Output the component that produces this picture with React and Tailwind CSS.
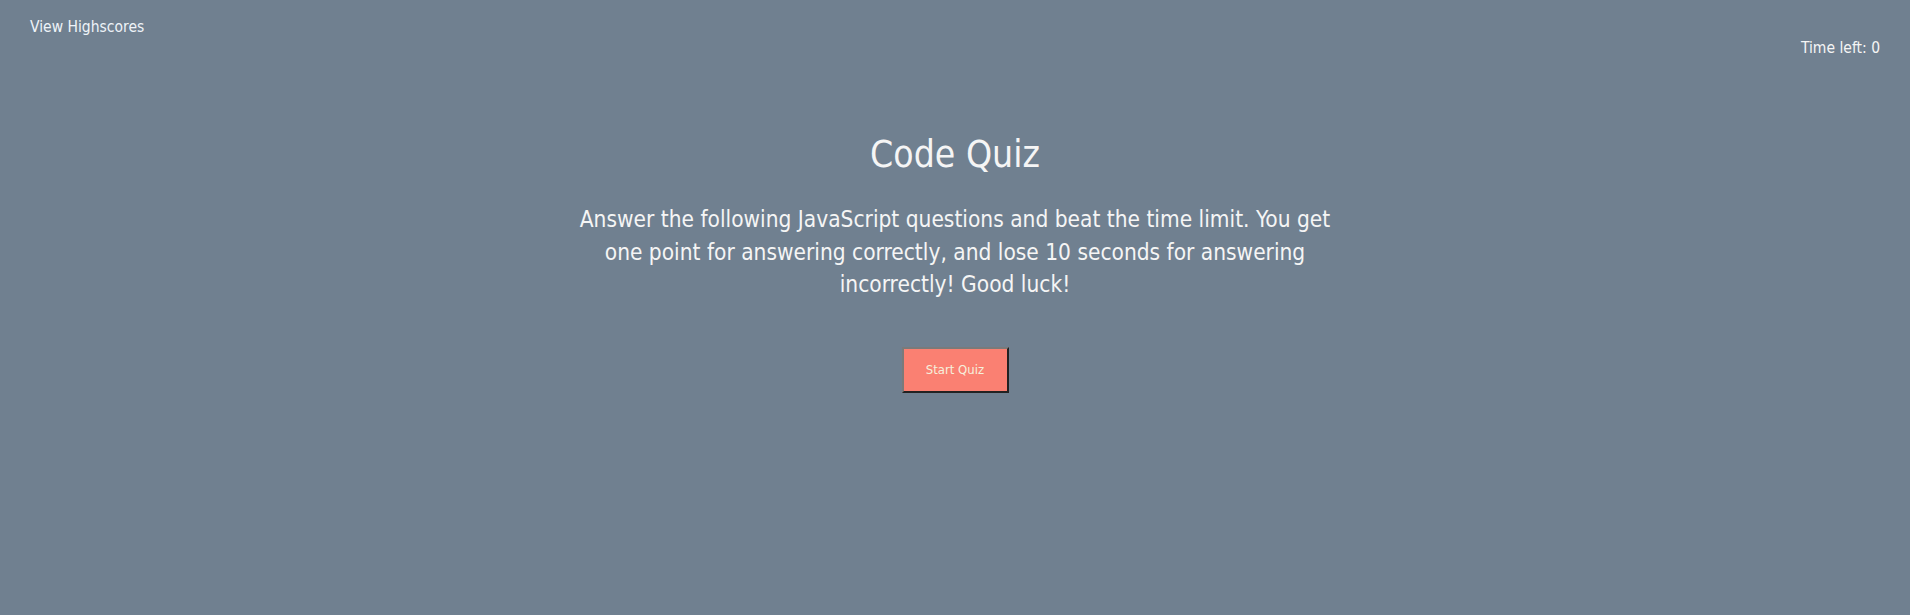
import React, { useState } from 'react';

export default function App() {
  const [timeLeft] = useState(0);

  return (
    <div
      className="min-h-[615px] w-full bg-[#708090] text-[#f5f5f5]"
      style={{ fontFamily: '"DejaVu Sans Condensed", "DejaVu Sans", sans-serif' }}
    >
      <header className="flex items-start justify-between px-[30px]">
        <a href="#" className="mt-[17px] text-[15.5px] leading-[20px] text-[#eef3f8]">
          View Highscores
        </a>
        <div className="mt-[38px] text-[15.5px] leading-[20px]">Time left: {timeLeft}</div>
      </header>

      <main className="mx-auto mt-[75px] flex max-w-[770px] flex-col items-center text-center">
        <h1 className="text-[37px] leading-[44px]">Code Quiz</h1>
        <p className="mt-[26px] text-[22.5px] leading-[32.5px]">
          Answer the following JavaScript questions and beat the time limit. You get one point for answering
          correctly, and lose 10 seconds for answering incorrectly! Good luck!
        </p>
        <button className="mt-[46px] h-[46px] w-[107px] border-2 border-t-[#7a7a7a] border-l-[#7a7a7a] border-r-[#222] border-b-[#222] bg-[#fa8072] text-[13px] text-[#f6f0dc]">
          Start Quiz
        </button>
      </main>
    </div>
  );
}
